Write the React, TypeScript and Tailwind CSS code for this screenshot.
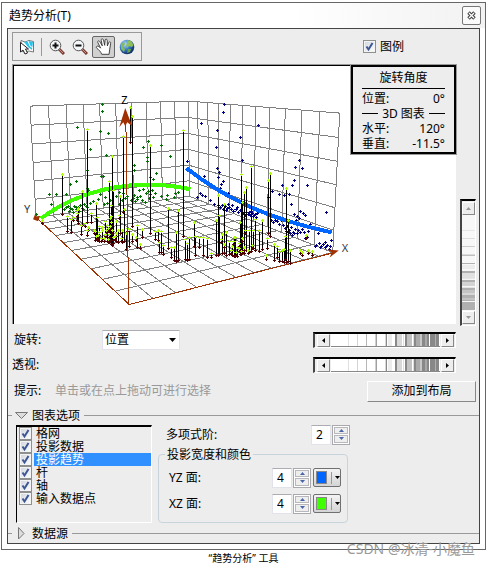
import type { ReactNode } from "react";

type Point = [number, number];

// Maps the unit square onto the quad a (0,0), b (1,0), c (1,1), d (0,1)
function project([a, b, c, d]: Point[]) {
  const dx1 = b[0] - c[0];
  const dx2 = d[0] - c[0];
  const dx3 = a[0] - b[0] + c[0] - d[0];
  const dy1 = b[1] - c[1];
  const dy2 = d[1] - c[1];
  const dy3 = a[1] - b[1] + c[1] - d[1];
  const det = dx1 * dy2 - dx2 * dy1;
  const g = (dx3 * dy2 - dx2 * dy3) / det;
  const h = (dx1 * dy3 - dx3 * dy1) / det;
  return (u: number, v: number) => {
    const w = g * u + h * v + 1;
    const x = ((b[0] - a[0] + g * b[0]) * u + (d[0] - a[0] + h * d[0]) * v + a[0]) / w;
    const y = ((b[1] - a[1] + g * b[1]) * u + (d[1] - a[1] + h * d[1]) * v + a[1]) / w;
    return `${x.toFixed(1)} ${y.toFixed(1)}`;
  };
}

function gridPath(corners: Point[], cols: number, rows: number) {
  const at = project(corners);
  let d = "";
  for (let i = 0; i <= cols; i++) d += `M${at(i / cols, 0)}L${at(i / cols, 1)}`;
  for (let j = 0; j <= rows; j++) d += `M${at(0, j / rows)}L${at(1, j / rows)}`;
  return d;
}

const leftWall = gridPath([[30, 106], [188, 101], [189, 196], [36, 217]], 10, 6);
const rightWall = gridPath([[188, 101], [339, 113], [332, 252], [189, 196]], 11, 6);
const floor = gridPath([[36, 217], [189, 196], [332, 252], [129, 304]], 11, 10);

// x, top, bottom
const sticks = [
  [62, 174, 214], [87, 129, 222], [82, 191, 225], [112, 156, 245], [109, 181, 242], [123, 136, 212],
  [130, 107, 142], [132, 116, 226], [150, 145, 233], [183, 130, 236], [67, 216, 231], [71, 219, 232],
  [78, 208, 223], [81, 225, 234], [77, 210, 220], [87, 230, 235], [91, 213, 222], [96, 203, 236],
  [95, 231, 240], [97, 217, 240], [99, 226, 241], [102, 230, 239], [105, 221, 236],
  [107, 225, 241], [110, 218, 240], [111, 205, 244], [113, 190, 243],
  [116, 221, 241], [118, 230, 242], [120, 196, 233], [122, 230, 242], [124, 209, 241], [126, 233, 249],
  [129, 229, 246], [132, 234, 241], [137, 225, 247], [142, 229, 237], [140, 244, 248], [155, 231, 239],
  [158, 230, 240], [159, 242, 252], [161, 231, 252], [163, 245, 254], [168, 208, 248],
  [171, 247, 257], [174, 247, 260], [176, 232, 261], [178, 210, 260], [185, 239, 259],
  [187, 243, 260], [189, 237, 259], [194, 222, 246], [195, 236, 255], [199, 237, 247], [203, 237, 255],
  [207, 238, 257], [211, 253, 257], [216, 220, 255], [218, 195, 255], [219, 215, 254],
  [222, 234, 253], [224, 204, 253], [226, 232, 255], [229, 241, 254], [232, 246, 255], [234, 237, 256],
  [236, 247, 256], [239, 222, 254], [240, 174, 250], [241, 202, 252], [243, 192, 253],
  [245, 187, 250], [248, 230, 252], [250, 166, 251], [252, 230, 248], [254, 219, 250],
  [258, 230, 251], [261, 220, 249], [266, 238, 248], [267, 180, 233], [269, 173, 236], [265, 255, 259],
  [273, 244, 260], [276, 246, 257], [278, 251, 261], [281, 250, 261], [283, 249, 262], [284, 236, 259],
  [285, 188, 262], [287, 220, 261], [289, 250, 263], [299, 250, 253], [307, 250, 253], [311, 251, 255],
];

// Short stems whose tip and base nearly touch
const low = [
  [42, 220], [73, 217], [77, 213], [85, 223], [88, 227], [94, 230], [98, 235], [102, 227], [104, 238],
  [106, 230], [109, 234], [110, 226], [115, 236], [119, 215], [121, 238], [127, 228], [136, 237],
  [96, 236], [99, 232], [101, 238], [105, 234], [108, 228], [111, 222], [112, 230], [113, 237],
  [108, 239], [111, 216], [116, 233], [231, 250], [235, 252], [238, 248], [240, 251], [243, 247],
  [247, 250], [233, 241], [224, 244], [238, 243], [251, 245], [241, 238], [221, 239], [244, 230],
  [301, 252], [305, 235],
];

const greenPoints = [
  [102, 104], [102, 111], [77, 127], [100, 131], [108, 133], [90, 149], [106, 155], [148, 141],
  [143, 147], [161, 145], [170, 156], [147, 157], [147, 161], [134, 165], [134, 170], [87, 170],
  [156, 173], [153, 179], [150, 177], [101, 176], [103, 176], [76, 181], [70, 184], [87, 188],
  [49, 194], [56, 194], [51, 204], [36, 214], [66, 194], [84, 195], [88, 190], [92, 192], [100, 194],
  [105, 197], [108, 190], [116, 196], [119, 192], [123, 193], [127, 196], [131, 200], [134, 195],
  [137, 197], [139, 190], [140, 196], [143, 189], [146, 193], [148, 191], [150, 194], [152, 190],
  [153, 197], [155, 193], [161, 196], [166, 199], [174, 197], [178, 192], [135, 201], [137, 199],
  [133, 198], [110, 200], [107, 203], [104, 204], [98, 199], [93, 201], [90, 203], [86, 206],
  [84, 204], [82, 208], [80, 205], [78, 207], [76, 209], [74, 206], [72, 209], [70, 208], [68, 206],
  [66, 207], [64, 209], [62, 205], [79, 211], [76, 207], [73, 212], [69, 211], [83, 209], [87, 207],
  [119, 204], [122, 200], [125, 198], [142, 200], [145, 202], [149, 198], [167, 195], [175, 193],
];

const navyPoints = [
  [224, 104], [223, 112], [201, 123], [217, 130], [257, 125], [239, 137], [216, 147], [187, 161],
  [241, 160], [298, 160], [294, 167], [301, 168], [217, 168], [219, 172], [204, 176], [218, 177],
  [223, 181], [221, 184], [220, 188], [293, 180], [291, 185], [306, 185], [281, 185], [228, 193],
  [271, 191], [278, 194], [283, 195], [288, 194], [267, 197], [200, 193], [202, 195], [205, 196],
  [197, 197], [210, 200], [214, 204], [290, 204], [325, 212], [218, 205], [220, 207], [222, 205],
  [225, 206], [227, 208], [229, 207], [231, 209], [233, 211], [235, 209], [237, 212], [239, 210],
  [242, 213], [245, 212], [247, 214], [249, 215], [251, 213], [253, 215], [255, 217], [252, 216],
  [248, 212], [244, 215], [236, 207], [232, 205], [228, 204], [223, 209], [226, 210], [250, 211],
  [254, 214], [256, 213], [270, 220], [272, 222], [274, 220], [276, 221], [278, 224], [280, 220],
  [282, 225], [284, 228], [286, 226], [288, 230], [290, 227], [292, 232], [294, 229], [296, 233],
  [299, 211], [302, 213], [304, 215], [293, 214], [296, 216], [295, 220], [298, 218], [300, 225],
  [289, 233], [287, 232], [285, 231], [291, 235], [293, 233], [297, 230], [299, 232], [301, 229],
  [303, 232], [307, 231], [309, 224], [304, 238], [306, 237], [308, 227], [317, 233], [330, 240],
  [315, 245], [318, 243], [320, 246], [322, 244], [324, 247], [326, 245], [328, 249], [314, 246],
  [324, 242], [319, 247], [329, 246], [325, 246],
];

const crosses = (points: number[][]) =>
  points.map(([x, y]) => `M${x - 1} ${y}h3v1h-3zM${x} ${y - 1}h1v3h-1z`).join("");

function TrendChart() {
  return (
    <svg viewBox="14 66 441 257" className="block h-auto w-full" role="img" aria-label="3D 图表">
      <g fill="none" shapeRendering="crispEdges">
        <path d={leftWall + rightWall + floor} stroke="#808080" />
        <path d="M36 217L129 304L334 252" stroke="#a03000" />
      </g>
      <g shapeRendering="crispEdges">
        <path d={crosses(greenPoints)} fill="#007000" />
        <path d={crosses(navyPoints)} fill="#000080" />
      </g>
      <path d="M41 218C85 186 140 178 190 189" fill="none" stroke="#40ff00" strokeWidth="4" shapeRendering="crispEdges" />
      <path d="M186 168C225 198 265 218 331 232" fill="none" stroke="#0066ff" strokeWidth="4" shapeRendering="crispEdges" />
      <g shapeRendering="crispEdges">
        <path d={sticks.map(([x, top, bottom]) => `M${x} ${top}h1V${bottom}h-1z`).join("")} />
        <path d={crosses(sticks.map(([x, , bottom]) => [x, bottom]))} fill="#500000" />
        <path d={crosses(low.map(([x, y]) => [x, y + 3]))} fill="#500000" />
        <path d={crosses(sticks.map(([x, top]) => [x, top]))} fill="#aaff00" />
        <path d={crosses(low)} fill="#aaff00" />
        <path d="M125.5 116L128.5 304" fill="none" stroke="#a03000" />
      </g>
      <g fill="#a03000">
        <path d="M125 108L132 126L127 122L125 126L123 122L119 127Z" />
        <path d="M338 250L329 257L331 252L327 249Z" />
        <path d="M33 219L35 214L36 216L40 216L38 221Z" />
      </g>
      <g fontSize="11" fontFamily="Noto Sans, sans-serif">
        <text x="121" y="104">Z</text>
        <text x="341" y="252" fill="#30404a">X</text>
        <text x="24" y="213" fill="#30404a">Y</text>
      </g>
    </svg>
  );
}

function Tick({ id }: { id: string }) {
  return (
    <span className="relative block size-[13px] shrink-0">
      <input
        id={id}
        type="checkbox"
        defaultChecked
        className="peer block size-[13px] appearance-none border border-[#8e8f8f] bg-gradient-to-br from-[#cfd4dc] to-white shadow-[inset_0_0_0_1px_#f4f4f4]"
      />
      <svg viewBox="0 0 13 13" className="pointer-events-none absolute inset-0 hidden peer-checked:block">
        <path d="M3.5 6.5L5.5 9.5L9.5 3" fill="none" stroke="#3d5795" strokeWidth="2" />
      </svg>
    </span>
  );
}

const stripes = [
  [17, 1, "#e0e0e0"], [26, 1, "#d4d4d4"], [35, 1, "#b8b8b8"], [44, 1, "#d0d0d0"], [45, 1, "#a0a0a0"],
  [54, 1, "#d8d8d8"], [55, 1, "#888"], [57, 4, "#ececec"], [64, 2, "#888"], [66, 5, "#d8d8d8"],
  [72, 1, "#e0e0e0"], [74, 2, "#888"], [76, 5, "#c2c2c2"], [82, 1, "#ddd"], [83, 2, "#888"],
  [85, 4, "#aaa"], [91, 3, "#888"], [94, 2, "#a8a8a8"], [96, 2, "#888"], [89, 2, "#c8c8c8"],
  [99, 5, "#888"], [104, 1, "#b0b0b0"], [105, 3, "#888"],
] as const;

function Wheel({ label, vertical = false }: { label: string; vertical?: boolean }) {
  const step = `flex size-[13px] shrink-0 items-center justify-center border border-t-white border-l-white border-r-[#888] border-b-[#888] bg-[#ededed] ${vertical ? "text-[#999]" : "text-black"}`;
  return (
    <div
      className={`flex border border-t-2 border-l-2 border-t-black border-l-[#444] border-r-white border-b-white bg-[#ededed] ${vertical ? "-mb-0.5 h-[127px] w-4 flex-col py-px" : "h-4 w-[143px] pr-px pl-0.5"}`}
    >
      <button type="button" aria-label={`${label} −`} className={step}>
        <svg viewBox="0 0 7 7" className="size-[7px]" fill="currentColor">
          <path d={vertical ? "M1 5H6L3.500 2Z" : "M5 1V6L2 3.500Z"} />
        </svg>
      </button>
      <div className={`relative min-h-0 min-w-0 flex-1 ${vertical ? "opacity-60" : "mx-px border-b border-[#888]"}`}>
        <svg
          viewBox={vertical ? "0 0 10 109" : "0 0 109 10"}
          preserveAspectRatio="none"
          shapeRendering="crispEdges"
          className="block size-full bg-white"
        >
          {stripes.map(([at, size, fill]) =>
            vertical ? (
              <rect key={at} y={at} width="10" height={size} fill={fill} />
            ) : (
              <rect key={at} x={at} width={size} height="10" fill={fill} />
            )
          )}
        </svg>
        <input type="range" aria-label={label} className="absolute inset-0 size-full opacity-0" />
      </div>
      <button type="button" aria-label={`${label} +`} className={step}>
        <svg viewBox="0 0 7 7" className="size-[7px]" fill="currentColor">
          <path d={vertical ? "M1 2H6L3.500 5Z" : "M2 1V6L5 3.500Z"} />
        </svg>
      </button>
    </div>
  );
}

function Spinner({ id, value }: { id: string; value: string }) {
  return (
    <div className="flex h-5 shrink-0">
      <input
        id={id}
        defaultValue={value}
        inputMode="numeric"
        className="w-5 border border-[#e2e3ea] border-t-[#abadb3] bg-white pl-1 text-xs outline-none"
      />
      <div className="ml-px flex w-[18px] flex-col gap-px border border-[#a9a9ad] bg-white p-px">
        <button type="button" aria-label="增加" className="flex flex-1 items-center justify-center border border-[#b8b8bc] bg-[#eee]">
          <svg viewBox="0 0 5 3" className="h-[3px] w-[5px]"><path d="M0 3H5L2.500 0Z" fill="#4964a8" /></svg>
        </button>
        <button type="button" aria-label="减少" className="flex flex-1 items-center justify-center border border-[#b8b8bc] bg-[#eee]">
          <svg viewBox="0 0 5 3" className="h-[3px] w-[5px]"><path d="M0 0H5L2.500 3Z" fill="#4964a8" /></svg>
        </button>
      </div>
    </div>
  );
}

function ColorButton({ label, children }: { label: string; children: ReactNode }) {
  return (
    <button
      type="button"
      aria-label={label}
      className="ml-0.5 flex h-[19px] w-7 items-center rounded-xs border border-[#707070] bg-gradient-to-b from-[#f4f4f4] to-[#d4d4d4] pl-0.5"
    >
      {children}
      <span className="ml-1 h-3 w-px bg-[#999]" />
      <svg viewBox="0 0 5 3" className="ml-[3px] h-[3px] w-[5px]"><path d="M0 0H5L2.500 3Z" /></svg>
    </button>
  );
}

function SelectIcon() {
  return (
    <svg viewBox="0 0 16 16" className="size-4">
      <path d="M2 1.500L6 3L10 1.500L14.500 2.500V13L10 12L6 13L2 12Z" fill="#fff" stroke="#777" />
      <path d="M5 3L10 2L14 3L13 11L9 8Z" fill="#28c4ec" />
      <path d="M9 2L11 7L14 9" fill="none" stroke="#fff" />
      <path d="M1.500 3.500V13L4 11L6 15L8.500 14L6.500 10H9.500Z" fill="#fff" stroke="#222" />
    </svg>
  );
}

function Magnifier({ plus = false }: { plus?: boolean }) {
  return (
    <svg viewBox="0 0 16 16" className="size-4">
      <path d="M10 10L15 15" stroke="#7a3b30" strokeWidth="3" />
      <path d="M10 10L14 14" stroke="#c9908a" />
      <circle cx="6.500" cy="6.500" r="5.300" fill="#f3f6f8" stroke="#555" />
      <path d={plus ? "M3.500 6.500H9.500M6.500 3.500V9.500" : "M3.500 6.500H9.500"} stroke="#111" strokeWidth="2" />
    </svg>
  );
}

function HandIcon() {
  return (
    <svg viewBox="0 0 16 16" className="size-[18px]">
      <path
        d="M6 14.500C5 12 3.500 10.500 1.500 9C.5 8 2 6.500 3.500 7.500L5 9L2.500 4C2 2.500 3.700 2 4.300 3.300L6.500 7L5.500 2C5.300.5 7.200.3 7.600 1.800L8.600 6.500L9 2C9.200.6 10.900.8 10.900 2.200L11 7L12.200 4C12.800 2.800 14.200 3.400 13.900 4.700L13 10.500L12.500 14.500Z"
        fill="#fff"
        stroke="#333"
        strokeWidth=".8"
      />
    </svg>
  );
}

function GlobeIcon() {
  return (
    <svg viewBox="0 0 16 16" className="size-4">
      <defs>
        <radialGradient id="sea" cx=".35" cy=".3" r=".75">
          <stop offset="0" stopColor="#b5dcf8" />
          <stop offset=".5" stopColor="#3b80c4" />
          <stop offset="1" stopColor="#0b2458" />
        </radialGradient>
      </defs>
      <circle cx="8" cy="8" r="7.300" fill="url(#sea)" />
      <path d="M8 1L12 2L14.500 6L13 8L10 7L8 9L7 6L9 4Z" fill="#8fbf5a" />
      <path d="M2 5L5 3L6 5L4 8L6 10L5 13L2 10Z" fill="#83b864" />
      <path d="M9 10L12 10L11 13L8 14Z" fill="#6aa545" />
    </svg>
  );
}

function Disclosure({ title, open = false }: { title: string; open?: boolean }) {
  return (
    <div className="flex h-[18px] items-center">
      <span className="h-px w-1 bg-[#999]" />
      <button type="button" aria-expanded={open} className="flex items-center">
        <svg viewBox="0 0 13 13" className="mr-1 ml-[3px] size-[13px]">
          <path d={open ? "M.5 3.500H12.500L6.500 9.500Z" : "M3.500 .5V12L9 6.500Z"} fill="#ddd" stroke="#777" />
        </svg>
        {title}
      </button>
      <span className="ml-1 h-px flex-1 bg-[#999]" />
    </div>
  );
}

const layers = ["格网", "投影数据", "投影趋势", "杆", "轴", "输入数据点"];

export default function App() {
  return (
    <div className="bg-white pt-0.5 pr-[5px] pl-px font-['Noto_Sans','Noto_Sans_CJK_SC',sans-serif] text-xs leading-4 text-black">
      <main className="relative border border-[#666] bg-white px-[5px] pb-[5px]">
        <header className="-mx-[5px] flex h-[25px] items-center justify-between bg-gradient-to-r from-white from-60% to-[#f2f2f2] pr-1 pl-[7px]">
          <h1>趋势分析(T)</h1>
          <button type="button" aria-label="关闭" className="flex size-[19px] items-center justify-center rounded-xs border border-[#777] bg-[#fafafa]">
            <svg viewBox="0 0 9 9" className="size-[9px]">
              <path d="M1.500 1.500L7.500 7.500M7.500 1.500L1.500 7.500" stroke="#444" strokeWidth="3.500" />
              <path d="M2 2L7 7M7 2L2 7" stroke="#fff" strokeWidth="1.300" />
            </svg>
          </button>
        </header>

        <div className="border border-[#444] bg-[#ededed]">
          <div className="flex items-center justify-between pt-[3px] pr-[75px] pl-1">
            <div role="toolbar" className="flex h-[29px] w-[130px] items-center border border-[#999] pl-1.5">
              <button type="button" aria-label="选择"><SelectIcon /></button>
              <span className="mx-1.5 h-[18px] w-px bg-[#999]" />
              <button type="button" aria-label="放大" className="ml-px"><Magnifier plus /></button>
              <button type="button" aria-label="缩小" className="ml-[7px]"><Magnifier /></button>
              <button type="button" aria-label="平移" className="ml-1 flex h-[22px] w-[23px] items-center justify-center rounded-xs border border-[#666] bg-[#d0d0d0]">
                <HandIcon />
              </button>
              <button type="button" aria-label="全图" className="ml-1"><GlobeIcon /></button>
            </div>
            <div className="flex items-center gap-1">
              <Tick id="legend" />
              <label htmlFor="legend">图例</label>
            </div>
          </div>

          <div className="mt-[3px] flex items-end gap-1 pr-[3px] pl-1">
            <div className="relative min-w-0 flex-1 border-t border-l border-[#999]">
              <div className="border-t border-l border-black bg-white">
                <TrendChart />
              </div>
              <aside className="absolute top-0 right-0 w-[105px] border-2 border-black bg-[#ededed] px-[9px] leading-[15px] outline outline-[#999]">
                <h2 className="border-b border-black pt-[3px] pb-0.5 text-center leading-4">旋转角度</h2>
                <dl className="pt-0.5 pb-px">
                  <div className="flex justify-between"><dt>位置:</dt><dd>0°</dd></div>
                  <div className="flex items-center gap-1">
                    <span className="h-px flex-1 bg-black" />
                    3D 图表
                    <span className="h-px flex-1 bg-black" />
                  </div>
                  <div className="flex justify-between"><dt>水平:</dt><dd>120°</dd></div>
                  <div className="flex justify-between"><dt>垂直:</dt><dd>-11.5°</dd></div>
                </dl>
              </aside>
            </div>
            <Wheel label="垂直" vertical />
          </div>

          <div className="mt-1 flex h-6 items-center pr-[23px] pl-1.5">
            <label htmlFor="rotate" className="w-[88px]">旋转:</label>
            <div className="relative">
              <select id="rotate" className="block h-5 w-[78px] appearance-none border border-[#e2e3ea] border-t-[#abadb3] bg-white pl-0.5 text-xs outline-none">
                <option>位置</option>
              </select>
              <svg viewBox="0 0 7 4" className="pointer-events-none absolute top-2 right-1 h-1 w-[7px]"><path d="M0 0H7L3.500 4Z" /></svg>
            </div>
            <div className="ml-auto"><Wheel label="旋转" /></div>
          </div>
          <div className="flex h-[26px] items-center justify-between pr-[23px] pl-1">
            <span>透视:</span>
            <Wheel label="透视" />
          </div>
          <div className="flex h-[27px] items-center pr-[3px] pl-1.5">
            <span className="w-[41px]">提示:</span>
            <span className="text-[#999]">单击或在点上拖动可进行选择</span>
            <button type="button" className="ml-auto h-[21px] w-[109px] border border-t-white border-l-white border-r-[#888] border-b-[#888]">
              添加到布局
            </button>
          </div>

          <div className="mt-0.5">
            <Disclosure title="图表选项" open />
          </div>
          <div className="flex gap-1.5 pl-2">
            <ul className="h-[98px] w-[136px] shrink-0 border border-t-2 border-t-black border-l-black border-r-white border-b-white pl-0.5">
              {layers.map((name, i) => (
                <li key={name} className="flex h-[13px] items-center gap-0.5 leading-[13px]">
                  <Tick id={`layer-${i}`} />
                  <label htmlFor={`layer-${i}`} className={name === "投影趋势" ? "flex-1 bg-[#3090ff] pl-0.5 text-white" : "flex-1 pl-0.5"}>
                    {name}
                  </label>
                </li>
              ))}
            </ul>
            <div className="w-[192px]">
              <div className="flex items-center justify-between pl-2">
                <label htmlFor="order">多项式阶:</label>
                <Spinner id="order" value="2" />
              </div>
              <fieldset className="mt-0.5 mr-0.5 h-[76px] rounded-sm border border-[#c8d4dc] px-1.5">
                <legend className="px-0.5">投影宽度和颜色</legend>
                <div className="mt-0.5 flex h-[26px] items-center pl-1">
                  <label htmlFor="yz" className="flex-1">YZ 面:</label>
                  <Spinner id="yz" value="4" />
                  <ColorButton label="YZ 颜色"><span className="h-[13px] w-[11px] border border-[#888] bg-[#0066ff]" /></ColorButton>
                </div>
                <div className="flex h-[26px] items-center pl-1">
                  <label htmlFor="xz" className="flex-1">XZ 面:</label>
                  <Spinner id="xz" value="4" />
                  <ColorButton label="XZ 颜色"><span className="h-[13px] w-[11px] border border-[#888] bg-[#40ff00]" /></ColorButton>
                </div>
              </fieldset>
            </div>
          </div>
          <div className="mt-0.5">
            <Disclosure title="数据源" />
          </div>
        </div>
        <p className="absolute right-2.5 -bottom-2 text-sm leading-4 text-[#999]">CSDN @冰清-小魔鱼</p>
      </main>
      <p className="text-center text-[10px]">“趋势分析” 工具</p>
    </div>
  );
}
